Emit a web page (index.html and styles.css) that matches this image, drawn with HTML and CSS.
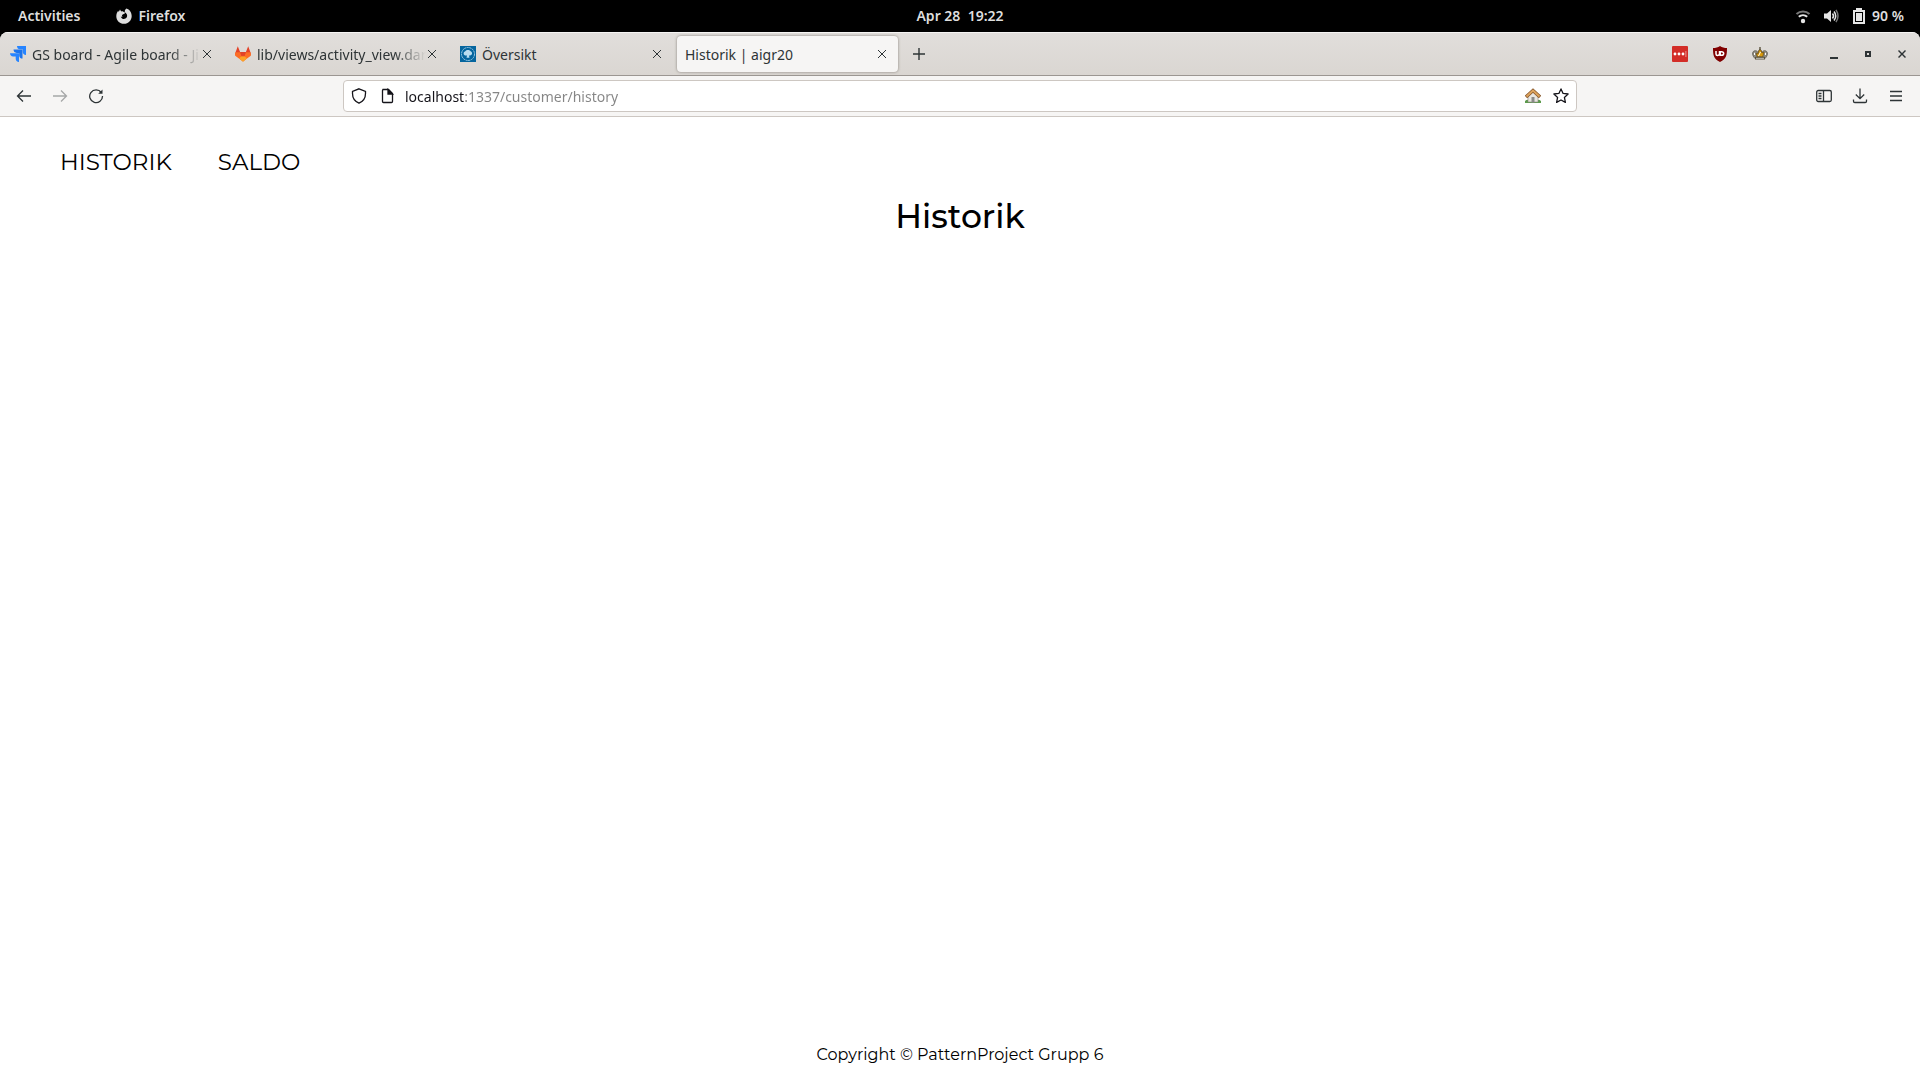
FILE: index.html
```html
<!DOCTYPE html>
<html lang="sv">
<head>
<meta charset="utf-8">
<title>Historik | aigr20</title>
<link rel="stylesheet" href="styles.css">
</head>
<body>
<header class="panel">
  <div class="panel-left">
    <button class="panel-button">Activities</button>
    <button class="panel-button app-button">
      <svg class="icon" viewBox="0 0 16 16"><path fill="#dedede" fill-rule="evenodd" d="M8 15.800C3.700 15.800.3 12.500.3 8.200c0-2.100.7-4 1.900-5.500L2.700 4 4 1.500 5.200 3.400c.8-.2 1.500-.1 2.200.4L8.800 4.400c.4.300.3.800-.1 1L6.700 6.500c-.9.5-.9 1.400-.2 1.900-.4.5-1 .4-1.700 0 .4 1.900 2.300 3 4.200 2.400 1.900-.6 2.600-2.600 1.900-4.300-.4-1-1.200-1.700-2-2.200-.5-1.500.2-3 1.600-3.800 3 .9 5.200 4 5.200 7.500 0 4.400-3.400 7.800-7.700 7.800z"/></svg>
      Firefox
    </button>
  </div>
  <button class="panel-button clock">Apr 28&nbsp; 19:22</button>
  <button class="panel-button status">
    <svg class="icon" viewBox="0 0 16 16" fill="none"><path d="M1.500 6c3.700-3.500 9.300-3.500 13 0" stroke="#777" stroke-width="2"/><path d="M3.800 8.800c2.400-2.200 6-2.200 8.400 0" stroke="#e6e6e6" stroke-width="2"/><circle cx="8" cy="13" r="2.200" fill="#e6e6e6"/></svg>
    <svg class="icon" viewBox="0 0 16 16" fill="none"><path d="M1 5.500h3L8 2v12l-4-3.500H1z" fill="#e6e6e6"/><path d="M9.500 5.500q2 2.500 0 5M11 3.500q3.500 4.500 0 9" stroke="#e6e6e6" stroke-width="1.500"/><path d="M13 1.800q4 6.200 0 12.400" stroke="#777" stroke-width="1.500"/></svg>
    <svg class="icon" viewBox="0 0 16 16"><path fill="#e6e6e6" fill-rule="evenodd" d="M5 0h6v2h3v14H2V2h3zM4 4v10h8V4zM5 5h6v8H5z"/></svg>
    <span>90 %</span>
  </button>
</header>

<div class="window">
  <div class="tabstrip">
    <div class="tab">
      <svg class="icon" viewBox="0 0 16 16"><path fill="#2684ff" d="M7 0h9v9c-2 0-3.300-1.300-3.300-3.200V3.300H10C8.200 3.300 7 2 7 0z"/><path fill="#1b73ec" d="M3.500 3.600h9v9c-2 0-3.300-1.300-3.300-3.200V6.900H6.700c-1.900 0-3.200-1.300-3.200-3.300z"/><path fill="#2684ff" d="M0 7.200h9V16c-2 0-3.300-1.300-3.300-3.200v-2.400H3.200C1.300 10.400 0 9.200 0 7.200z"/></svg>
      <a class="tab-label faded" href="#">GS board - Agile board - Jira</a>
      <button class="tab-close" aria-label="Close tab"><svg viewBox="0 0 12 12"><path d="M2 2l8 8M10 2l-8 8"/></svg></button>
    </div>
    <div class="tab">
      <svg class="icon" viewBox="0 0 16 16"><path fill="#e24329" d="M2.800.3l2.400 5.900h5.600L13.200.3l2.700 7.200L8 15.500.1 7.500z"/><path fill="#fc6d26" d="M.7 6.300l4.500 0L8 15.500.2 9.700c-.4-.8-.3-1.800.5-3.400zM15.300 6.300h-4.500L8 15.500l7.800-5.800c.4-.8.3-1.800-.5-3.400z"/><path fill="#fca326" d="M4 12.300l4-3 4 3-4 3.500z"/><path fill="#e24329" d="M5 6h6l-3 5z"/></svg>
      <a class="tab-label faded" href="#">lib/views/activity_view.dart</a>
      <button class="tab-close" aria-label="Close tab"><svg viewBox="0 0 12 12"><path d="M2 2l8 8M10 2l-8 8"/></svg></button>
    </div>
    <div class="tab">
      <svg class="icon" viewBox="0 0 16 16"><path fill="#05659e" d="M0 0h16v16H0z"/><circle cx="8" cy="8" r="6.500" fill="none" stroke="#9dc9e3" stroke-dasharray="2 .6"/><path fill="#b9dcef" d="M8 4c1.500 0 2.200.7 2.600 1.200 1.800.8 1.900 2.800.6 3.800-.7.500-1.600.5-2.200.5l.5 2.200h-3L7 9.500c-1.300.2-2.900 0-3.300-1.200-.4-1.700.5-2.700 1.600-3.100C5.800 4.500 6.800 4 8 4z"/></svg>
      <a class="tab-label" href="#">Översikt</a>
      <button class="tab-close" aria-label="Close tab"><svg viewBox="0 0 12 12"><path d="M2 2l8 8M10 2l-8 8"/></svg></button>
    </div>
    <div class="tab selected">
      <a class="tab-label" href="#">Historik | aigr20</a>
      <button class="tab-close" aria-label="Close tab"><svg viewBox="0 0 12 12"><path d="M2 2l8 8M10 2l-8 8"/></svg></button>
    </div>
    <button class="new-tab" aria-label="New tab"><svg viewBox="0 0 12 12"><path d="M6 0v12M0 6h12"/></svg></button>
    <div class="extensions">
      <button aria-label="Passwords"><svg class="icon" viewBox="0 0 16 16"><rect width="16" height="16" rx="1" fill="#d32d27"/><g fill="#fff"><circle cx="3" cy="8" r="1.400"/><circle cx="7" cy="8" r="1.400"/><circle cx="11" cy="8" r="1.400"/><path d="M13.500 5h.8v6h-.8z" opacity=".6"/></g></svg></button>
      <button aria-label="Content blocker"><svg class="icon" viewBox="0 0 16 16"><path fill="#800000" d="M8 0c2 1.500 4.500 2 7 2 0 7-.5 11-7 14C1.500 13 1 9 1 2c2.500 0 5-.5 7-2z"/><path fill="none" stroke="#fff" stroke-width="1.500" d="M4 5v3q0 1.500 1.500 1.500T7.500 8V5M8.200 5.700h1.300q2.200 0 2.200 1.800T9.500 9.300H8.200z"/></svg></button>
      <button aria-label="Crown"><svg class="icon" viewBox="0 0 16 16"><path fill="#8f8b80" stroke="#5d5a50" stroke-width=".8" d="M3 12.500C0 9.500 0 6 2 5c2-.8 3.500.2 4 1.500L8 3l2 3.500C10.500 5 12 4.200 14 5c2 1 2 4.500-1 7.500z"/><path fill="#d99a0b" stroke="#6b4f12" stroke-width=".7" d="M5.500 11.500L4 7l2 1 1-4h2l1 3 2-1-1.500 5.500z"/><path stroke="#fff" fill="none" d="M2.500 9V6.800M13.500 9V6.800M6.500 10l2-4"/><path fill="#5b533f" d="M7.300 1h1.400v2.500H7.300zM3 11q5-1.500 10 0v2.500H3z"/><path stroke="#c9c6bc" d="M4 12.300h8"/></svg></button>
    </div>
    <div class="window-controls">
      <button aria-label="Minimize"><svg viewBox="0 0 10 10"><path d="M1 8h8v2H1z"/></svg></button>
      <button aria-label="Maximize"><svg viewBox="0 0 10 10"><path fill-rule="evenodd" d="M2 2h6v6H2zM4 4v2h2V4z"/></svg></button>
      <button aria-label="Close"><svg viewBox="0 0 10 10"><path d="M1 2l1-1 3 3 3-3 1 1-3 3 3 3-1 1-3-3-3 3-1-1 3-3z"/></svg></button>
    </div>
  </div>

  <div class="toolbar">
    <div class="nav-buttons">
      <button aria-label="Back"><svg class="icon line" viewBox="0 0 16 16"><path d="M15 8H2M7 2.500L1.500 8 7 13.500"/></svg></button>
      <button aria-label="Forward" disabled><svg class="icon line" viewBox="0 0 16 16"><path d="M1 8h13M9 2.500L14.500 8 9 13.500"/></svg></button>
      <button aria-label="Reload"><svg class="icon line" viewBox="0 0 16 16"><path d="M13.300 4.500A6.400 6.400 0 1 0 14.500 8"/><path d="M14.500 1.500v4.300h-4.300z" fill="#2e3436" stroke="none"/></svg></button>
    </div>
    <form class="urlbar">
      <svg class="icon line dark" viewBox="0 0 16 16"><path d="M8 .8l6.500 2.700v2C14.500 10 12 13.500 8 15.200 4 13.500 1.500 10 1.500 5.500v-2z"/></svg>
      <svg class="icon line dark" viewBox="0 0 16 16"><path d="M3.500 1.500h6l4 4v8q0 1-1 1h-8q-1 0-1-1v-11q0-1 1-1z"/><path d="M9 1.500v4.500h4.500z" fill="#15141a"/></svg>
      <input class="address" type="text" aria-label="Address" value="localhost:1337/customer/history">
      <button type="button" aria-label="Home"><svg class="icon" viewBox="0 0 16 16"><path fill="#5d9b4d" d="M0 13q2-2 4-1h8q2-1 4 1v2H0z"/><path fill="#e9e6e1" stroke="#8e8780" stroke-width=".6" d="M3 8l5-5 5 5v6H3z"/><path fill="#8b8b89" d="M6.500 9h3v5.500h-3z"/><path fill="none" stroke="#87562b" stroke-width="3.400" d="M1 9l7-6.500L15 9"/><path fill="none" stroke="#dca35d" stroke-width="2" d="M1.500 8.500L8 2.500l6.500 6"/></svg></button>
      <button type="button" aria-label="Bookmark this page"><svg class="icon line dark" viewBox="0 0 16 16"><path stroke-linejoin="round" d="M8 .9l2.100 4.500 5 .6-3.700 3.400 1 5L8 12l-4.400 2.400 1-5L.9 6l5-.6z"/></svg></button>
    </form>
    <div class="tool-buttons">
      <button aria-label="Sidebars"><svg class="icon line" viewBox="0 0 16 16"><rect x=".7" y="2.500" width="14.600" height="11" rx="1.500"/><path d="M7.500 2.500v11M2.500 5.500h3M2.500 8h3M2.500 10.500h3"/></svg></button>
      <button aria-label="Downloads"><svg class="icon line" viewBox="0 0 16 16"><path d="M8 .5v10M3.800 6.500L8 10.700l4.200-4.200M1.500 11.500v1.700q0 1.300 1.300 1.300h10.400q1.300 0 1.300-1.300v-1.700"/></svg></button>
      <button aria-label="Menu"><svg class="icon line" viewBox="0 0 16 16"><path d="M2 3.500h12M2 8h12M2 12.500h12"/></svg></button>
    </div>
  </div>

  <div class="page">
    <nav class="site-nav">
      <a href="#">HISTORIK</a>
      <a href="#">SALDO</a>
    </nav>
    <main><h1>Historik</h1></main>
    <footer>Copyright © PatternProject Grupp 6</footer>
  </div>
</div>
</body>
</html>
```
FILE: styles.css
```css
* { box-sizing: border-box; }

body {
  margin: 0;
  min-height: 100vh;
  display: flex;
  flex-direction: column;
  background: #000;
  font-family: "Noto Sans", sans-serif;
  font-size: 14px;
  color: #2e3436;
}

button {
  display: flex;
  align-items: center;
  justify-content: center;
  padding: 0;
  border: 0;
  background: none;
  color: inherit;
  font: inherit;
}

a { color: inherit; text-decoration: none; }
svg { display: block; flex: none; }
.icon { width: 16px; height: 16px; }
.line { fill: none; stroke: #2e3436; stroke-width: 1.3; }
.dark { stroke: #15141a; }

.panel {
  display: grid;
  grid-template-columns: 1fr auto 1fr;
  height: 32px;
  padding: 0 12px 1px;
  color: #dedede;
  font-weight: 600;
}
.panel-left { display: flex; gap: 36px; padding-left: 6px; }
.app-button { gap: 6px; }
.status { justify-self: end; gap: 12px; }
.status span { min-width: 36px; margin-left: -7px; text-align: left; }

.window {
  flex: 1;
  display: flex;
  flex-direction: column;
  overflow: hidden;
  border-radius: 8px 8px 0 0;
  background: #fff;
}

.tabstrip {
  display: flex;
  align-items: center;
  height: 44px;
  border-top: 1px solid #f5f4f3;
  border-bottom: 1px solid #9b9692;
  background: linear-gradient(#e1dedb, #dad6d2);
}
.tab {
  display: flex;
  align-items: center;
  flex: 0 1 221px;
  height: 36px;
  margin: 0 2px;
  padding: 0 10px 0 8px;
  border-radius: 4px;
  min-width: 0;
}
.tab .icon { margin-right: 6px; }
.tab.selected {
  background: #f6f5f4;
  box-shadow: 0 0 3px #87807a;
}
.tab-label {
  flex: 1;
  overflow: hidden;
  white-space: nowrap;
}
.faded {
  -webkit-mask-image: linear-gradient(to left, transparent, #000 32px);
  mask-image: linear-gradient(to left, transparent, #000 32px);
}
.tab-close svg {
  width: 12px;
  height: 12px;
  stroke: #2e3436;
}
.new-tab { width: 38px; height: 36px; }
.new-tab svg {
  width: 12px;
  height: 12px;
  stroke: #2e3436;
  stroke-width: 1.4;
}

.extensions { display: flex; gap: 24px; margin-left: auto; }
.window-controls { display: flex; gap: 24px; padding: 0 13px 0 61px; }
.window-controls svg { width: 10px; height: 10px; fill: #2e3436; }

.toolbar {
  display: grid;
  grid-template-columns: 343px 1fr 343px;
  align-items: center;
  height: 41px;
  border-bottom: 1px solid #cdc7c2;
  background: #f6f5f4;
}
.nav-buttons, .tool-buttons { display: flex; gap: 20px; }
.nav-buttons { padding-left: 16px; }
.nav-buttons button:disabled { opacity: 0.4; }
.tool-buttons { justify-content: flex-end; padding-right: 16px; }

.urlbar {
  display: flex;
  align-items: center;
  gap: 12px;
  height: 32px;
  padding: 0 7px;
  border: 1px solid #cdc7c2;
  border-radius: 4px;
  background: #fff;
}
.address {
  flex: 1;
  min-width: 0;
  margin-left: -2px;
  padding: 0;
  border: 0;
  outline: 0;
  font: inherit;
  color: transparent;
  background: linear-gradient(to right, #15141a 60px, #858585 60px);
  -webkit-background-clip: text;
  background-clip: text;
}

.page {
  flex: 1;
  display: flex;
  flex-direction: column;
  color: #000;
  font-family: Montserrat, Inter, sans-serif;
}
.site-nav {
  display: flex;
  gap: 46px;
  padding: 29px 60px 0;
  font-size: 23px;
  line-height: 32px;
}
main { flex: 1; }
h1 {
  margin: 16px 0 0;
  text-align: center;
  font-size: 33px;
  line-height: 44px;
  font-weight: 500;
}
footer {
  padding-bottom: 15px;
  text-align: center;
  font-size: 16px;
  line-height: 20px;
}
```
